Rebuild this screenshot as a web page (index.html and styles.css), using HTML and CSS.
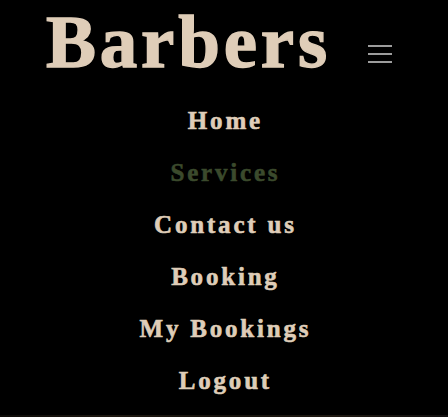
FILE: index.html
```html
<!DOCTYPE html>
<html lang="en">
<head>
<meta charset="utf-8">
<title>Barbers</title>
<link rel="stylesheet" href="styles.css">
</head>
<body>
<header class="navbar">
  <a class="brand" href="#">Barbers</a>
  <button class="toggler" aria-label="Toggle navigation">
    <svg width="24" height="18" viewBox="0 0 24 18"><path d="M0 1h24M0 9h24M0 17h24" stroke="#9c9c9c" stroke-width="2" fill="none"/></svg>
  </button>
</header>
<nav class="menu">
  <a class="item" href="#">Home</a>
  <a class="item active" href="#">Services</a>
  <a class="item" href="#">Contact us</a>
  <a class="item" href="#">Booking</a>
  <a class="item" href="#">My Bookings</a>
  <a class="item" href="#">Logout</a>
</nav>
<div class="hero"></div>
</body>
</html>
```
FILE: styles.css
```css
html, body {
  margin: 0;
  padding: 0;
  background: #000;
}
body {
  font-family: "Liberation Serif", "DejaVu Serif", serif;
  color: #dfcdb8;
}
.navbar {
  display: flex;
  align-items: flex-start;
  padding: 4px 0 0 46px;
  height: 75px;
}
.brand {
  font-size: 75px;
  line-height: 1;
  font-weight: 700;
  letter-spacing: 3.8px;
  -webkit-text-stroke: 1.4px #dfcdb8;
  color: #dfcdb8;
  text-decoration: none;
}
.toggler {
  margin: 41px 0 0 37px;
  padding: 0;
  border: 0;
  background: transparent;
  width: 24px;
  height: 18px;
  display: block;
}
.toggler svg { display: block; }
.menu {
  display: flex;
  flex-direction: column;
  align-items: center;
  padding-top: 16px;
}
.item {
  display: block;
  font-size: 25px;
  line-height: 52px;
  font-weight: 700;
  letter-spacing: 2.8px;
  padding-left: 2.8px;
  -webkit-text-stroke: 0.6px currentColor;
  color: #dfcdb8;
  text-decoration: none;
}
.item.active { color: #3b4a2c; }
.hero {
  margin-top: 8px;
  height: 40px;
  background: linear-gradient(90deg, #0d0b08, #1e1811 25%, #16120c 50%, #1f1912 75%, #121010);
}
```
